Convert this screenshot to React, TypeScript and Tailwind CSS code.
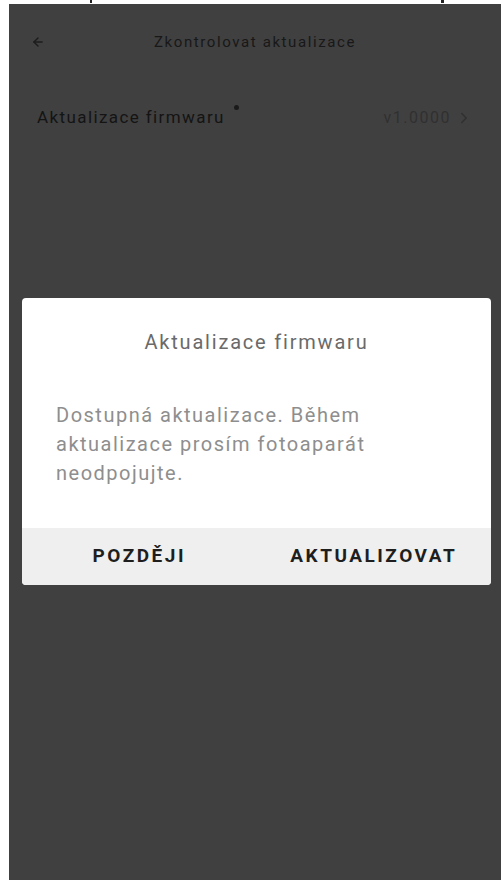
import { ChevronRight, ArrowLeft } from 'lucide-react';

export default function App() {
  return (
    <div className="min-h-screen w-[504px] bg-white" style={{ fontFamily: 'Roboto, "Noto Sans", sans-serif' }}>
      <div className="relative ml-[9px] pt-[4px] w-[492px]">
        <span className="absolute left-[81px] top-0 h-[3px] w-[2px] bg-[#222]" />
        <span className="absolute left-[432px] top-0 h-[3px] w-[3px] bg-[#222]" />
        <div className="relative h-[876px] w-[492px] bg-[#404040] overflow-hidden">
          <div className="flex h-[76px] items-center px-[22px]">
            <ArrowLeft className="h-[14px] w-[14px] text-[#1c1c1c]" strokeWidth={2.5} />
            <div className="flex-1 pr-[14px] text-center text-[15px] tracking-[1.6px] text-[#181818]">Zkontrolovat aktualizace</div>
          </div>
          <div className="flex h-[76px] items-center px-[28px]">
            <div className="relative text-[17px] tracking-[1.4px] text-[#141414]">
              Aktualizace firmwaru
              <span className="absolute -right-[14px] top-0 h-[5px] w-[5px] rounded-full bg-[#1a1a1a]" />
            </div>
            <div className="flex-1" />
            <span className="text-[16px] tracking-[1.5px] text-[#303030]">v1.0000</span>
            <ChevronRight className="ml-[4px] h-[18px] w-[18px] text-[#303030]" />
          </div>

          <div className="absolute left-[13px] top-[294px] w-[469px] overflow-hidden rounded-[4px] bg-white">
            <div className="pt-[29px] text-center text-[20px] tracking-[1.8px] text-[#6a6a6a]">Aktualizace firmwaru</div>
            <div className="px-[34px] pt-[44px] pb-[40px] text-[20px] leading-[29px] tracking-[1.5px] text-[#8e8e8e]">
              Dostupná aktualizace. Během
              <br />
              aktualizace prosím fotoaparát
              <br />
              neodpojujte.
            </div>
            <div className="flex h-[57px] items-center bg-[#efefef]">
              <button className="flex-1 text-center text-[19px] font-bold tracking-[2.5px] text-[#1e1e1e]">POZDĚJI</button>
              <button className="flex-1 text-center text-[19px] font-bold tracking-[2.5px] text-[#1e1e1e]">AKTUALIZOVAT</button>
            </div>
          </div>
        </div>
      </div>
    </div>
  );
}
